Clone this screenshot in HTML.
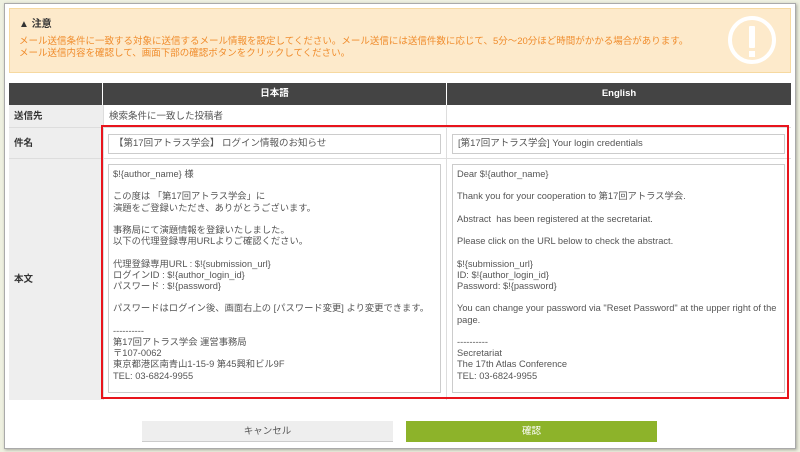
<!DOCTYPE html>
<html><head><meta charset="utf-8"><style>
*{box-sizing:border-box;margin:0;padding:0}
body{width:800px;height:452px;background:#eef0e0;font-family:"Liberation Sans","Noto Sans CJK JP",sans-serif;font-size:9.5px;color:#444;position:relative;overflow:hidden}
.panel{position:absolute;left:4px;top:3px;width:792px;height:446px;background:#fff;border:1px solid #aaa;box-shadow:1px 1px 3px rgba(0,0,0,.3)}
.note{position:absolute;left:9px;top:8px;width:782px;height:65px;background:#fdeacb;border:1px solid #f6d9a0}
.note h4{position:absolute;left:9px;top:6px;font-size:10px;color:#333;font-weight:bold}
.note p{position:absolute;left:9px;top:27px;color:#f08c2c;font-size:9.5px;line-height:12px}
.excl{position:absolute;right:14px;top:7px;width:48px;height:48px;border:4px solid #fff;border-radius:50%}
.excl:before{content:"";position:absolute;left:17px;top:6px;width:6px;height:22px;background:#fff;border-radius:1px}
.excl:after{content:"";position:absolute;left:17px;top:31px;width:6px;height:6px;background:#fff}
.abs{position:absolute}
.hd{background:#444;color:#fff;font-weight:bold;text-align:center;line-height:22px;top:83px;height:22px}
.lab{background:#eee;font-weight:bold;color:#333;padding-left:5px}
.cell{border-bottom:1px solid #ddd}
.inp{background:#fff;border:1px solid #ccc;padding:0 5px;color:#555;line-height:18px;height:20px}
.ta{background:#fff;border:1px solid #ccc;padding:4px 4px;color:#555;line-height:11.2px;white-space:pre;font-size:9.3px}
.btn{top:421px;height:21px;line-height:21px;text-align:center;width:251px}
</style></head><body>
<div class="panel"></div>
<div class="note"><h4>▲ 注意</h4><p>メール送信条件に一致する対象に送信するメール情報を設定してください。メール送信には送信件数に応じて、5分～20分ほど時間がかかる場合があります。<br>メール送信内容を確認して、画面下部の確認ボタンをクリックしてください。</p><div class="excl"></div></div>

<div class="abs hd" style="left:9px;width:93px"></div>
<div class="abs hd" style="left:103px;width:343px">日本語</div>
<div class="abs hd" style="left:447px;width:344px">English</div>

<div class="abs lab cell" style="left:9px;top:105px;width:94px;height:23px;line-height:23px">送信先</div>
<div class="abs cell" style="left:103px;top:105px;width:688px;height:23px;line-height:23px;padding-left:6px;color:#555">検索条件に一致した投稿者</div>
<div class="abs lab cell" style="left:9px;top:128px;width:94px;height:31px;line-height:31px">件名</div>
<div class="abs cell" style="left:103px;top:128px;width:688px;height:31px"></div>
<div class="abs lab" style="left:9px;top:159px;width:94px;height:241px;line-height:241px">本文</div>
<div class="abs" style="left:446px;top:105px;width:1px;height:295px;background:#ddd"></div>
<div class="abs" style="left:103px;top:105px;width:1px;height:295px;background:#ddd"></div>

<div class="abs inp" style="left:108px;top:134px;width:333px">【第17回アトラス学会】 ログイン情報のお知らせ</div>
<div class="abs inp" style="left:452px;top:134px;width:333px">[第17回アトラス学会] Your login credentials</div>

<div class="abs ta" style="left:108px;top:164px;width:333px;height:229px">$!{author_name} 様

この度は 「第17回アトラス学会」に
演題をご登録いただき、ありがとうございます。

事務局にて演題情報を登録いたしました。
以下の代理登録専用URLよりご確認ください。

代理登録専用URL : $!{submission_url}
ログインID : $!{author_login_id}
パスワード : $!{password}

パスワードはログイン後、画面右上の [パスワード変更] より変更できます。

----------
第17回アトラス学会 運営事務局
〒107-0062
東京都港区南青山1-15-9 第45興和ビル9F
TEL: 03-6824-9955</div>
<div class="abs ta" style="left:452px;top:164px;width:333px;height:229px;white-space:pre-wrap">Dear $!{author_name}

Thank you for your cooperation to 第17回アトラス学会.

Abstract  has been registered at the secretariat.

Please click on the URL below to check the abstract.

$!{submission_url}
ID: $!{author_login_id}
Password: $!{password}

You can change your password via "Reset Password" at the upper right of the page.

----------
Secretariat
The 17th Atlas Conference
TEL: 03-6824-9955</div>

<div class="abs" style="left:101px;top:125px;width:688px;height:274px;border:2px solid #e8141c"></div>

<div class="abs btn" style="left:142px;background:#eee;color:#555;border-bottom:1px solid #ccc">キャンセル</div>
<div class="abs btn" style="left:406px;background:#8db32a;color:#fff">確認</div>
</body></html>
